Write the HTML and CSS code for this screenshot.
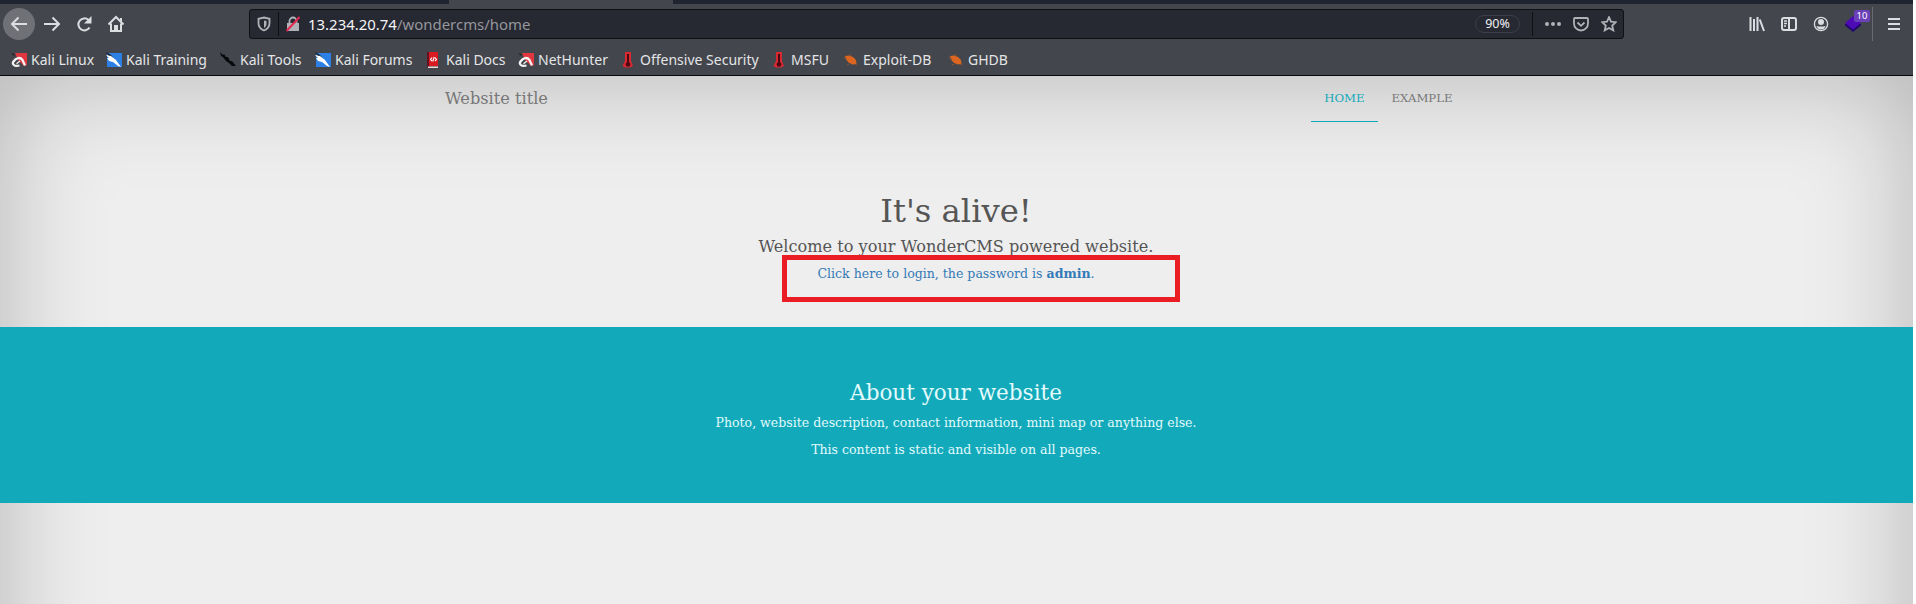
FILE: index.html
```html
<!DOCTYPE html>
<html lang="en">
<head>
<meta charset="utf-8">
<title>Website title - Home</title>
<link rel="stylesheet" href="styles.css">
</head>
<body>
<svg class="defs" width="0" height="0">
  <symbol id="dragon" viewBox="0 0 16 16"><path fill="#e0363f" d="M4 1h12v12l-3 1-6-6z"/><path fill="#26242a" d="M0 1l4 1-1 2z"/><path fill="none" stroke="#f4f2f2" stroke-width="2.3" d="M8.500 13.500C3 15 .8 12 2.500 9.500 5 6 9 4.500 11.500 8l2.500 5.500"/><path fill="none" stroke="#f4f2f2" stroke-width="1.300" d="M5.500 11.800L9 9"/></symbol>
  <symbol id="knife" viewBox="0 0 16 16"><path fill="#2c7fe4" d="M1 1h15v14H1z"/><path fill="#17181c" d="M0 0l5 3 4 5-5-2z"/><path fill="#fff" d="M0 3l5 1 5 4 5 7-3-1-5-4-4-1-2-3 2 0z"/></symbol>
  <symbol id="tool" viewBox="0 0 16 16"><path fill="#08090b" d="M0 0l3 3 1-1 2 3 2 0 2 4 2 0 4 5-4 0-3-3-3-2-3-4-2-1z"/></symbol>
  <symbol id="book" viewBox="0 0 16 16"><path fill="#641220" d="M1 0h3v15H1z"/><path fill="#d91a22" d="M3 0h9v14H3z"/><path fill="#f3d8d8" d="M2 14.500h10V16H2z"/><path fill="none" stroke="#fff" stroke-width="1.100" d="M6 5.500L4.500 7.500 6 9M9 5.500l1.500 2L9 9M8.200 5L6.800 9.500"/></symbol>
  <symbol id="thermo" viewBox="0 0 16 16"><path fill="#da2833" d="M5 0h6v9l2 5-3 1.500H5L2.500 14 5 9z"/><path fill="#4b0810" d="M7 2h2v8l1.500 2-1 2.500h-3L5.500 12 7 10z"/></symbol>
  <symbol id="bug" viewBox="0 0 16 16"><path fill="#dc661f" d="M2 4l4-.5 4 1.500 3 3 .5 4-4 .5-4-2-2.500-3z"/><path stroke="#8d5233" d="M1 6l3 1M6 12l-2 1M12 12l2 1M7 4l1-2"/></symbol>
</svg>
<div class="window">
  <header class="chrome">
    <div class="tabs"><div class="tab"></div></div>
    <div class="toolbar">
      <div class="nav-buttons">
        <span class="back"><svg width="18" height="18" viewBox="0 0 18 18"><path d="M17 9H2.500M8.500 2.500L2 9l6.500 6.500"/></svg></span>
        <svg width="18" height="18" viewBox="0 0 18 18"><path d="M1 9h14.500M9.500 2.500L16 9l-6.500 6.500"/></svg>
        <svg width="18" height="18" viewBox="0 0 18 18"><path d="M14.500 12.500A6 6 0 1 1 13.500 5"/><path class="solid" d="M16.500 1v7.500H9z"/></svg>
        <svg width="18" height="18" viewBox="0 0 18 18"><path d="M1.500 9.500L9 2l7.500 7.500M4 8.500V16h10V8.500"/><path class="solid" d="M7 10h4v6H7z"/><path class="solid" d="M13 3h2v4l-2-2z"/></svg>
      </div>
      <div class="urlbar">
        <svg class="shield" width="16" height="16" viewBox="0 0 16 16"><path d="M8 1.500l5.500 1.300v4.400c0 3.500-2 5.800-5.500 7.300-3.500-1.500-5.500-3.800-5.500-7.300V2.800z"/><path class="solid" d="M8 4.500l2.500.6V8C10.500 9.800 9.500 11 8 12z"/></svg>
        <span class="rule"></span>
        <svg class="lock" width="16" height="16" viewBox="0 0 16 16"><path class="solid" d="M2 7h12v8H2z"/><path d="M4.500 8V5a3.500 3.500 0 0 1 7 0v3"/><path class="slash" d="M1.500 15L14.500 1"/></svg>
        <span class="address"><b>13.234.20.74</b>/wondercms/home</span>
        <span class="zoom">90%</span>
        <span class="rule"></span>
        <svg class="dots" width="16" height="16" viewBox="0 0 16 16"><circle cx="2" cy="8" r="2"/><circle cx="8" cy="8" r="2"/><circle cx="14" cy="8" r="2"/></svg>
        <svg class="pocket" width="16" height="16" viewBox="0 0 16 16"><path d="M2 2h12q1 0 1 1v4.500a7 7 0 0 1-14 0V3q0-1 1-1z"/><path d="M4.500 6.500L8 9.800l3.500-3.300"/></svg>
        <svg class="star" width="16" height="16" viewBox="0 0 16 16"><path d="M8 1.200l2 4.500 4.800.5-3.600 3.300 1.100 4.900L8 12l-4.300 2.400 1.100-4.900L1.200 6.200 6 5.700z"/></svg>
      </div>
      <div class="actions">
        <svg width="16" height="16" viewBox="0 0 16 16"><path d="M1.500 1v14M5 3v12M8.500 1v14M10.800 3.500L15 15"/></svg>
        <svg width="16" height="16" viewBox="0 0 16 16"><rect x="1" y="2" width="14" height="12" rx="2"/><path d="M8 2v12"/><path class="thin" d="M3 5h3M3 7.500h3M3 10h2"/></svg>
        <svg width="16" height="16" viewBox="0 0 16 16"><circle class="thin" cx="8" cy="8" r="6.600"/><circle class="solid" cx="8" cy="6" r="3"/><path class="solid" d="M3.500 10q4.500 1 9 0-1 3.600-4.500 3.600T3.500 10z"/></svg>
        <span class="ext"><svg width="16" height="16" viewBox="0 0 16 16"><path class="low" d="M0 8h16v1.500L8 16 0 9.500z"/><path class="high" d="M8 0l8 7-8 6.500L0 7z"/></svg><span class="badge">10</span></span>
        <span class="divider"></span>
        <svg class="menu" width="12" height="14" viewBox="0 0 12 14"><path d="M0 2h12M0 7h12M0 12h12"/></svg>
      </div>
    </div>
    <nav class="bookmarks">
      <span><svg><use href="#dragon"/></svg>Kali Linux</span>
      <span><svg><use href="#knife"/></svg>Kali Training</span>
      <span><svg><use href="#tool"/></svg>Kali Tools</span>
      <span><svg><use href="#knife"/></svg>Kali Forums</span>
      <span><svg><use href="#book"/></svg>Kali Docs</span>
      <span><svg><use href="#dragon"/></svg>NetHunter</span>
      <span><svg><use href="#thermo"/></svg>Offensive Security</span>
      <span><svg><use href="#thermo"/></svg>MSFU</span>
      <span><svg><use href="#bug"/></svg>Exploit-DB</span>
      <span><svg><use href="#bug"/></svg>GHDB</span>
    </nav>
  </header>
  <main class="viewport">
    <div class="page">
      <div class="site-nav">
        <span class="brand">Website title</span>
        <div class="links"><a class="active">HOME</a><a>EXAMPLE</a></div>
      </div>
      <section class="hero">
        <h1>It's alive!</h1>
        <h4>Welcome to your WonderCMS powered website.</h4>
        <p>Click here to login, the password is <b>admin</b>.</p>
        <div class="highlight"></div>
      </section>
      <section class="about">
        <h3>About your website</h3>
        <p>Photo, website description, contact information, mini map or anything else.</p>
        <p>This content is static and visible on all pages.</p>
      </section>
    </div>
  </main>
</div>
</body>
</html>
```
FILE: styles.css
```css
* { box-sizing: border-box; }
body { margin: 0; background: #fff; overflow: hidden; }
h1, h3, h4, p { margin: 0; font-weight: normal; }
.defs { position: absolute; }
.window { width: 1913px; height: 604px; display: flex; flex-direction: column; }
.chrome { height: 76px; background: #43464c; border-bottom: 1px solid #08080c; font-family: "Noto Sans", sans-serif; color: #e4e5e7; }
.tabs { height: 4px; background: #202330; padding-left: 449px; }
.tab { width: 224px; height: 4px; background: #43464c; }
.toolbar { height: 40px; display: flex; align-items: center; }
.toolbar svg { fill: none; stroke: #dcdde0; stroke-width: 2; flex: none; }
.toolbar svg .solid { fill: #dcdde0; stroke: none; }
.toolbar svg .thin { stroke-width: 1.3; }
.nav-buttons { width: 249px; padding-left: 3px; display: flex; align-items: center; gap: 14px; }
.back { width: 32px; height: 32px; border-radius: 50%; background: #6f7176; display: flex; align-items: center; justify-content: center; margin-right: -6px; }
.urlbar { width: 1375px; height: 30px; background: #262832; border: 1px solid #101117; border-radius: 3px; display: flex; align-items: center; padding: 0 6px; }
.urlbar svg { stroke: #b1b2b7; stroke-width: 1.8; }
.urlbar svg .solid { fill: #b1b2b7; }
.rule { width: 1px; height: 24px; background: #0f1016; margin: 0 6px; }
.urlbar .slash { stroke: #e22850; stroke-width: 2; }
.address { margin-left: 7px; font-size: 14.95px; line-height: 20px; color: #96979d; flex: 1; }
.address b { font-weight: normal; color: #f5f5f7; }
.zoom { width: 45px; height: 18px; border: 1px solid #3d3f48; border-radius: 9px; font-size: 12.5px; line-height: 16px; text-align: center; color: #f0f0f2; margin-right: 6px; }
.urlbar .dots { fill: #b1b2b7; stroke: none; margin-left: 6px; }
.pocket, .star { margin-left: 12px; }
.actions { margin-left: 125px; display: flex; align-items: center; gap: 16px; }
.ext { position: relative; width: 16px; height: 16px; display: flex; }
.toolbar .low { fill: #22086e; stroke: none; }
.toolbar .high { fill: #4c0bb4; stroke: none; }
.badge { position: absolute; left: 9px; top: -6px; width: 16px; height: 12px; border-radius: 2px; background: #6b41b8; font-size: 9.5px; line-height: 12px; text-align: center; color: #fff; }
.divider { width: 1px; height: 34px; background: #6a6c72; margin-left: -5px; }
.menu { margin-left: -1px; }
.bookmarks { height: 31px; padding-left: 11px; display: grid; grid-template-columns: 95px 114px 95px 111px 92px 102px 151px 72px 105px 80px; align-items: center; font-size: 14px; line-height: 20px; white-space: nowrap; }
.bookmarks span { display: flex; align-items: center; gap: 4px; }
.bookmarks svg { width: 16px; height: 16px; flex: none; }
.viewport { flex: 1; min-height: 0; overflow: hidden; }
.page { height: 760px; padding-right: 1px; background: #eee; box-shadow: inset 0 0 105px rgba(0,0,0,.25); font-family: "DejaVu Serif", serif; font-size: 12.55px; line-height: 18px; color: #555; }
.site-nav { height: 46px; padding: 0 446px 0 445px; display: flex; justify-content: space-between; }
.brand { font-size: 16.2px; line-height: 24px; padding-top: 11px; color: #777; }
.links { display: flex; font-size: 11.7px; line-height: 18px; color: #777; }
.links a { padding: 13px 13.5px 0; height: 46px; }
.links .active { color: #12a9ba; border-bottom: 1px solid #12a9ba; }
.hero { position: relative; height: 205px; padding-top: 71px; text-align: center; }
.hero h1 { font-size: 32.3px; line-height: 36px; }
.hero h4 { font-size: 16.15px; line-height: 18px; margin-top: 9px; }
.hero p { margin-top: 9px; color: #337ab7; }
.highlight { position: absolute; left: 782px; top: 133px; width: 398px; height: 47px; border: 5px solid #ea1c24; }
.about { height: 176px; padding-top: 54px; margin-right: -1px; padding-right: 1px; background: #12a9ba; color: #e3fbfd; text-align: center; }
.about h3 { font-size: 21.5px; line-height: 24px; margin-bottom: 9px; }
.about p + p { margin-top: 9px; }
```
